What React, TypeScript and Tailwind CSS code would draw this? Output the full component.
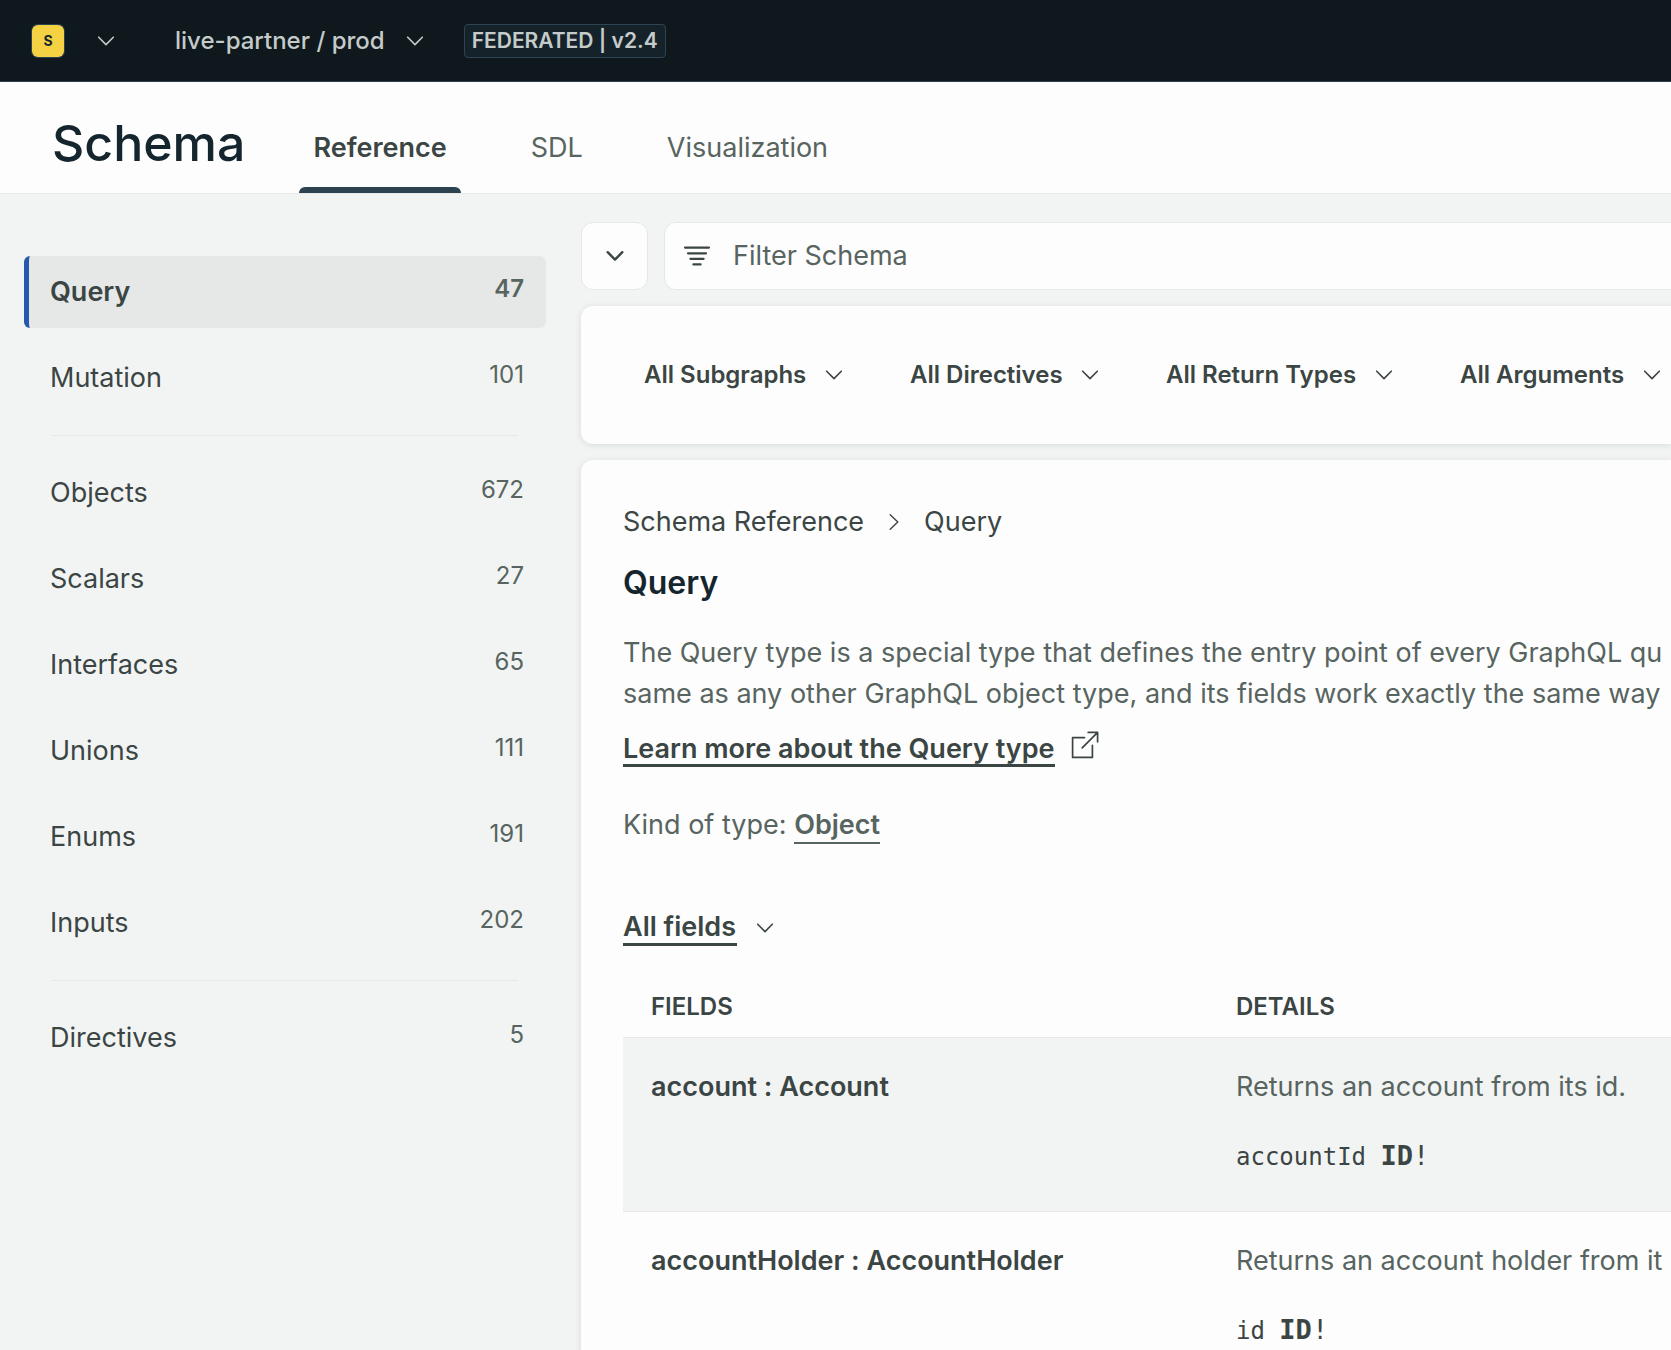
import { useState } from 'react'
import clsx from 'clsx'

interface NavItem {
  label: string
  count: number
}

interface Field {
  name: string
  type: string
  description: string
  argName: string
  argType: string
}

const NAV_GROUPS: NavItem[][] = [
  [
    { label: 'Query', count: 47 },
    { label: 'Mutation', count: 101 },
  ],
  [
    { label: 'Objects', count: 672 },
    { label: 'Scalars', count: 27 },
    { label: 'Interfaces', count: 65 },
    { label: 'Unions', count: 111 },
    { label: 'Enums', count: 191 },
    { label: 'Inputs', count: 202 },
  ],
  [{ label: 'Directives', count: 5 }],
]

const TABS = ['Reference', 'SDL', 'Visualization']

const FILTERS = ['All Subgraphs', 'All Directives', 'All Return Types', 'All Arguments']

const FIELDS: Field[] = [
  { name: 'account', type: 'Account', description: 'Returns an account from its id.', argName: 'accountId', argType: 'ID' },
  { name: 'accountHolder', type: 'AccountHolder', description: 'Returns an account holder from it', argName: 'id', argType: 'ID' },
]

function ChevronDown({ bold }: { bold?: boolean }) {
  return (
    <svg viewBox="0 0 28 28" className="pointer-events-none size-7 shrink-0" fill="none" stroke="currentColor"
      strokeWidth={bold ? 2.4 : 1.6} strokeLinecap="round" strokeLinejoin="round" aria-hidden="true">
      <path d="M6.7 10.2L14 17.6l7.3-7.4" />
    </svg>
  )
}

function ChevronRight() {
  return (
    <svg viewBox="0 0 28 28" className="size-7 shrink-0" fill="none" stroke="currentColor"
      strokeWidth="1.4" strokeLinecap="round" strokeLinejoin="round" aria-hidden="true">
      <path d="M10.2 6.7l7.6 7.3-7.6 7.3" />
    </svg>
  )
}

function FilterIcon() {
  return (
    <svg viewBox="0 0 28 28" className="size-7 shrink-0" fill="none" stroke="currentColor"
      strokeWidth="2.2" strokeLinecap="round" aria-hidden="true">
      <path d="M2 5.6h24M5 11.3h18M7.4 16.8h13.2M10.4 22.4h7.2" />
    </svg>
  )
}

function ExternalLinkIcon() {
  return (
    <svg viewBox="0 0 28 28" className="size-7 shrink-0" fill="none" stroke="currentColor"
      strokeWidth="1.7" strokeLinecap="round" strokeLinejoin="round" aria-hidden="true">
      <path d="M13.5 6.6H1.6v19.8h19.8V14.4M17.2 1.4h9.4v9.4M26.4 1.6L11.2 16.8" />
    </svg>
  )
}

function TopBar() {
  return (
    <header className="flex h-[82px] shrink-0 items-center border-b border-[#2c4250] bg-[#0f181c] pl-8 text-[#c4cbca]">
      <button className="flex items-center gap-7" aria-label="Switch organization">
        <span className="flex size-8 items-center justify-center rounded-md bg-[#f5d243] text-sm font-bold text-[#15252d] ring-1 ring-[#2c4250]">
          S
        </span>
        <ChevronDown />
      </button>
      <button className="ml-[55px] flex items-center gap-4 text-2xl font-medium">
        live-partner / prod
        <ChevronDown />
      </button>
      <div className="ml-[35px] rounded border border-[#2c4454] bg-[#15222a] px-[7px] text-[21px] leading-8 font-semibold">
        FEDERATED | v2.4
      </div>
    </header>
  )
}

function Sidebar({ active, onSelect }: { active: string; onSelect: (label: string) => void }) {
  return (
    <nav className="w-[581px] shrink-0 pt-[62px] pr-[35px] pl-6">
      {NAV_GROUPS.map((group, i) => (
        <div key={i}>
          {i > 0 && <hr className="my-[21px] mr-7 ml-7 border-[#e6e8e8]" />}
          <ul className="flex flex-col gap-3.5">
            {group.map(({ label, count }) => {
              const selected = label === active
              return (
                <li key={label}>
                  <a
                    href={`#${label.toLowerCase()}`}
                    onClick={() => onSelect(label)}
                    className={clsx(
                      'flex h-[72px] items-center justify-between rounded-md border-l-[5px] pr-[22px] pl-[21px] text-[27px]',
                      selected ? 'border-[#2559ab] bg-[#e6e8e7] font-semibold' : 'border-transparent'
                    )}
                  >
                    {label}
                    <span className="pb-1.5 text-2xl text-[#57645f]">{count}</span>
                  </a>
                </li>
              )
            })}
          </ul>
        </div>
      ))}
    </nav>
  )
}

function FilterSelect({ label }: { label: string }) {
  return (
    <div className="flex shrink-0 items-center gap-[13px]">
      <select aria-label={label} className="appearance-none bg-transparent text-2xl font-semibold">
        <option>{label}</option>
      </select>
      <ChevronDown />
    </div>
  )
}

function FieldsTable() {
  return (
    <table className="mt-[31px] w-full table-fixed text-left">
      <thead className="text-2xl">
        <tr className="h-[60px] border-b border-[#e6e8e8]">
          <th className="w-[585px] pl-7 font-semibold">FIELDS</th>
          <th className="pl-7 font-semibold">DETAILS</th>
        </tr>
      </thead>
      <tbody>
        {FIELDS.map(({ name, type, description, argName, argType }) => (
          <tr key={name} className="h-[174px] border-b border-[#e6e8e8] align-top odd:bg-[#f2f4f4]">
            <td className="pt-7 pl-7 text-[27px] leading-[41px] font-semibold">
              {name} : {type}
            </td>
            <td className="pt-7 pl-7 text-[27px] leading-[41px] whitespace-nowrap">
              <p className="text-[#57645f]">{description}</p>
              <code className="mt-7 block font-['DejaVu_Sans_Mono',monospace] text-[27px] leading-[41px]">
                <span className="text-2xl">{argName} </span>
                <b>{argType}</b>!
              </code>
            </td>
          </tr>
        ))}
      </tbody>
    </table>
  )
}

export default function App() {
  const [tab, setTab] = useState('Reference')
  const [active, setActive] = useState('Query')

  return (
    <div className="flex h-screen flex-col overflow-hidden bg-[#f2f4f4] font-['Inter',sans-serif] text-[#3b4544] [font-feature-settings:'calt'_0]">
      <TopBar />

      {/* Page title and tabs */}
      <div className="flex h-28 shrink-0 items-end border-b border-[#e6e8e8] bg-[#fdfdfd] pl-[52px]">
        <h1 className="mr-[54px] pb-5 text-[50px] leading-[60px] font-medium text-[#15252d]">Schema</h1>
        <div role="tablist" className="flex gap-14">
          {TABS.map((name) => (
            <button
              key={name}
              role="tab"
              aria-selected={tab === name}
              onClick={() => setTab(name)}
              className={clsx(
                'flex flex-col px-3.5 text-[27px]',
                tab === name ? 'font-semibold' : 'text-[#57645f]'
              )}
            >
              <span className="pb-[19px] leading-[41px]">{name}</span>
              <span className={clsx('-mx-3.5 h-1.5 self-stretch rounded-t-md', tab === name && 'bg-[#2c4250]')} />
            </button>
          ))}
        </div>
      </div>

      <div className="flex min-h-0 flex-1">
        <Sidebar active={active} onSelect={setActive} />

        {/* Negative margin leaves room for the card shadows inside the clipped column */}
        <main className="-ml-2 flex min-w-0 flex-1 flex-col gap-4 overflow-hidden pt-7 pl-2">
          <div className="flex h-[68px] shrink-0 gap-4">
            <button
              aria-label="Toggle filters"
              className="flex w-[67px] shrink-0 items-center justify-center rounded-xl border border-[#e6e8e8] bg-[#fdfdfd]"
            >
              <ChevronDown bold />
            </button>
            <label className="flex flex-1 items-center gap-[22px] rounded-l-xl border border-r-0 border-[#e6e8e8] bg-[#fdfdfd] pl-[18px]">
              <FilterIcon />
              <input
                type="text"
                aria-label="Filter Schema"
                placeholder="Filter Schema"
                className="flex-1 bg-transparent text-[27px] outline-none placeholder:text-[#57645f]"
              />
            </label>
          </div>

          <div className="flex h-[138px] shrink-0 items-center gap-[62px] overflow-hidden rounded-l-xl bg-[#fdfdfd] pl-[63px] shadow-[0_1px_6px_rgba(21,37,45,0.12)]">
            {FILTERS.map((label) => (
              <FilterSelect key={label} label={label} />
            ))}
          </div>

          <section className="flex-1 rounded-tl-xl bg-[#fdfdfd] pt-[41px] pl-[42px] shadow-[0_1px_6px_rgba(21,37,45,0.12)]">
            <nav className="flex items-center gap-4 text-[27px] leading-[41px]">
              <a href="#reference">Schema Reference</a>
              <ChevronRight />
              <a href="#query">Query</a>
            </nav>
            <h2 className="mt-[17px] text-[32px] leading-[48px] font-semibold text-[#15252d]">Query</h2>
            <p className="mt-[25px] text-[27px] leading-[41px] whitespace-nowrap text-[#57645f]">
              The Query type is a special type that defines the entry point of every GraphQL qu
              <br />
              same as any other GraphQL object type, and its fields work exactly the same way
            </p>
            <div className="mt-[17px] flex items-start gap-4 text-[27px]">
              <a href="#learn-more" className="mt-0.5 border-b-[3px] border-current leading-[31px] font-semibold">
                Learn more about the Query type
              </a>
              <ExternalLinkIcon />
            </div>
            <p className="mt-10 text-[27px] leading-[35px] text-[#57645f]">
              Kind of type:{' '}
              <a href="#object" className="inline-block border-b-2 border-current font-semibold">Object</a>
            </p>
            <div className="mt-[66px] flex items-center gap-3.5">
              <select
                aria-label="Fields shown"
                className="appearance-none border-b-[3px] border-current bg-transparent text-[27px] leading-[33px] font-semibold"
              >
                <option>All fields</option>
              </select>
              <ChevronDown />
            </div>
            <FieldsTable />
          </section>
        </main>
      </div>
    </div>
  )
}
